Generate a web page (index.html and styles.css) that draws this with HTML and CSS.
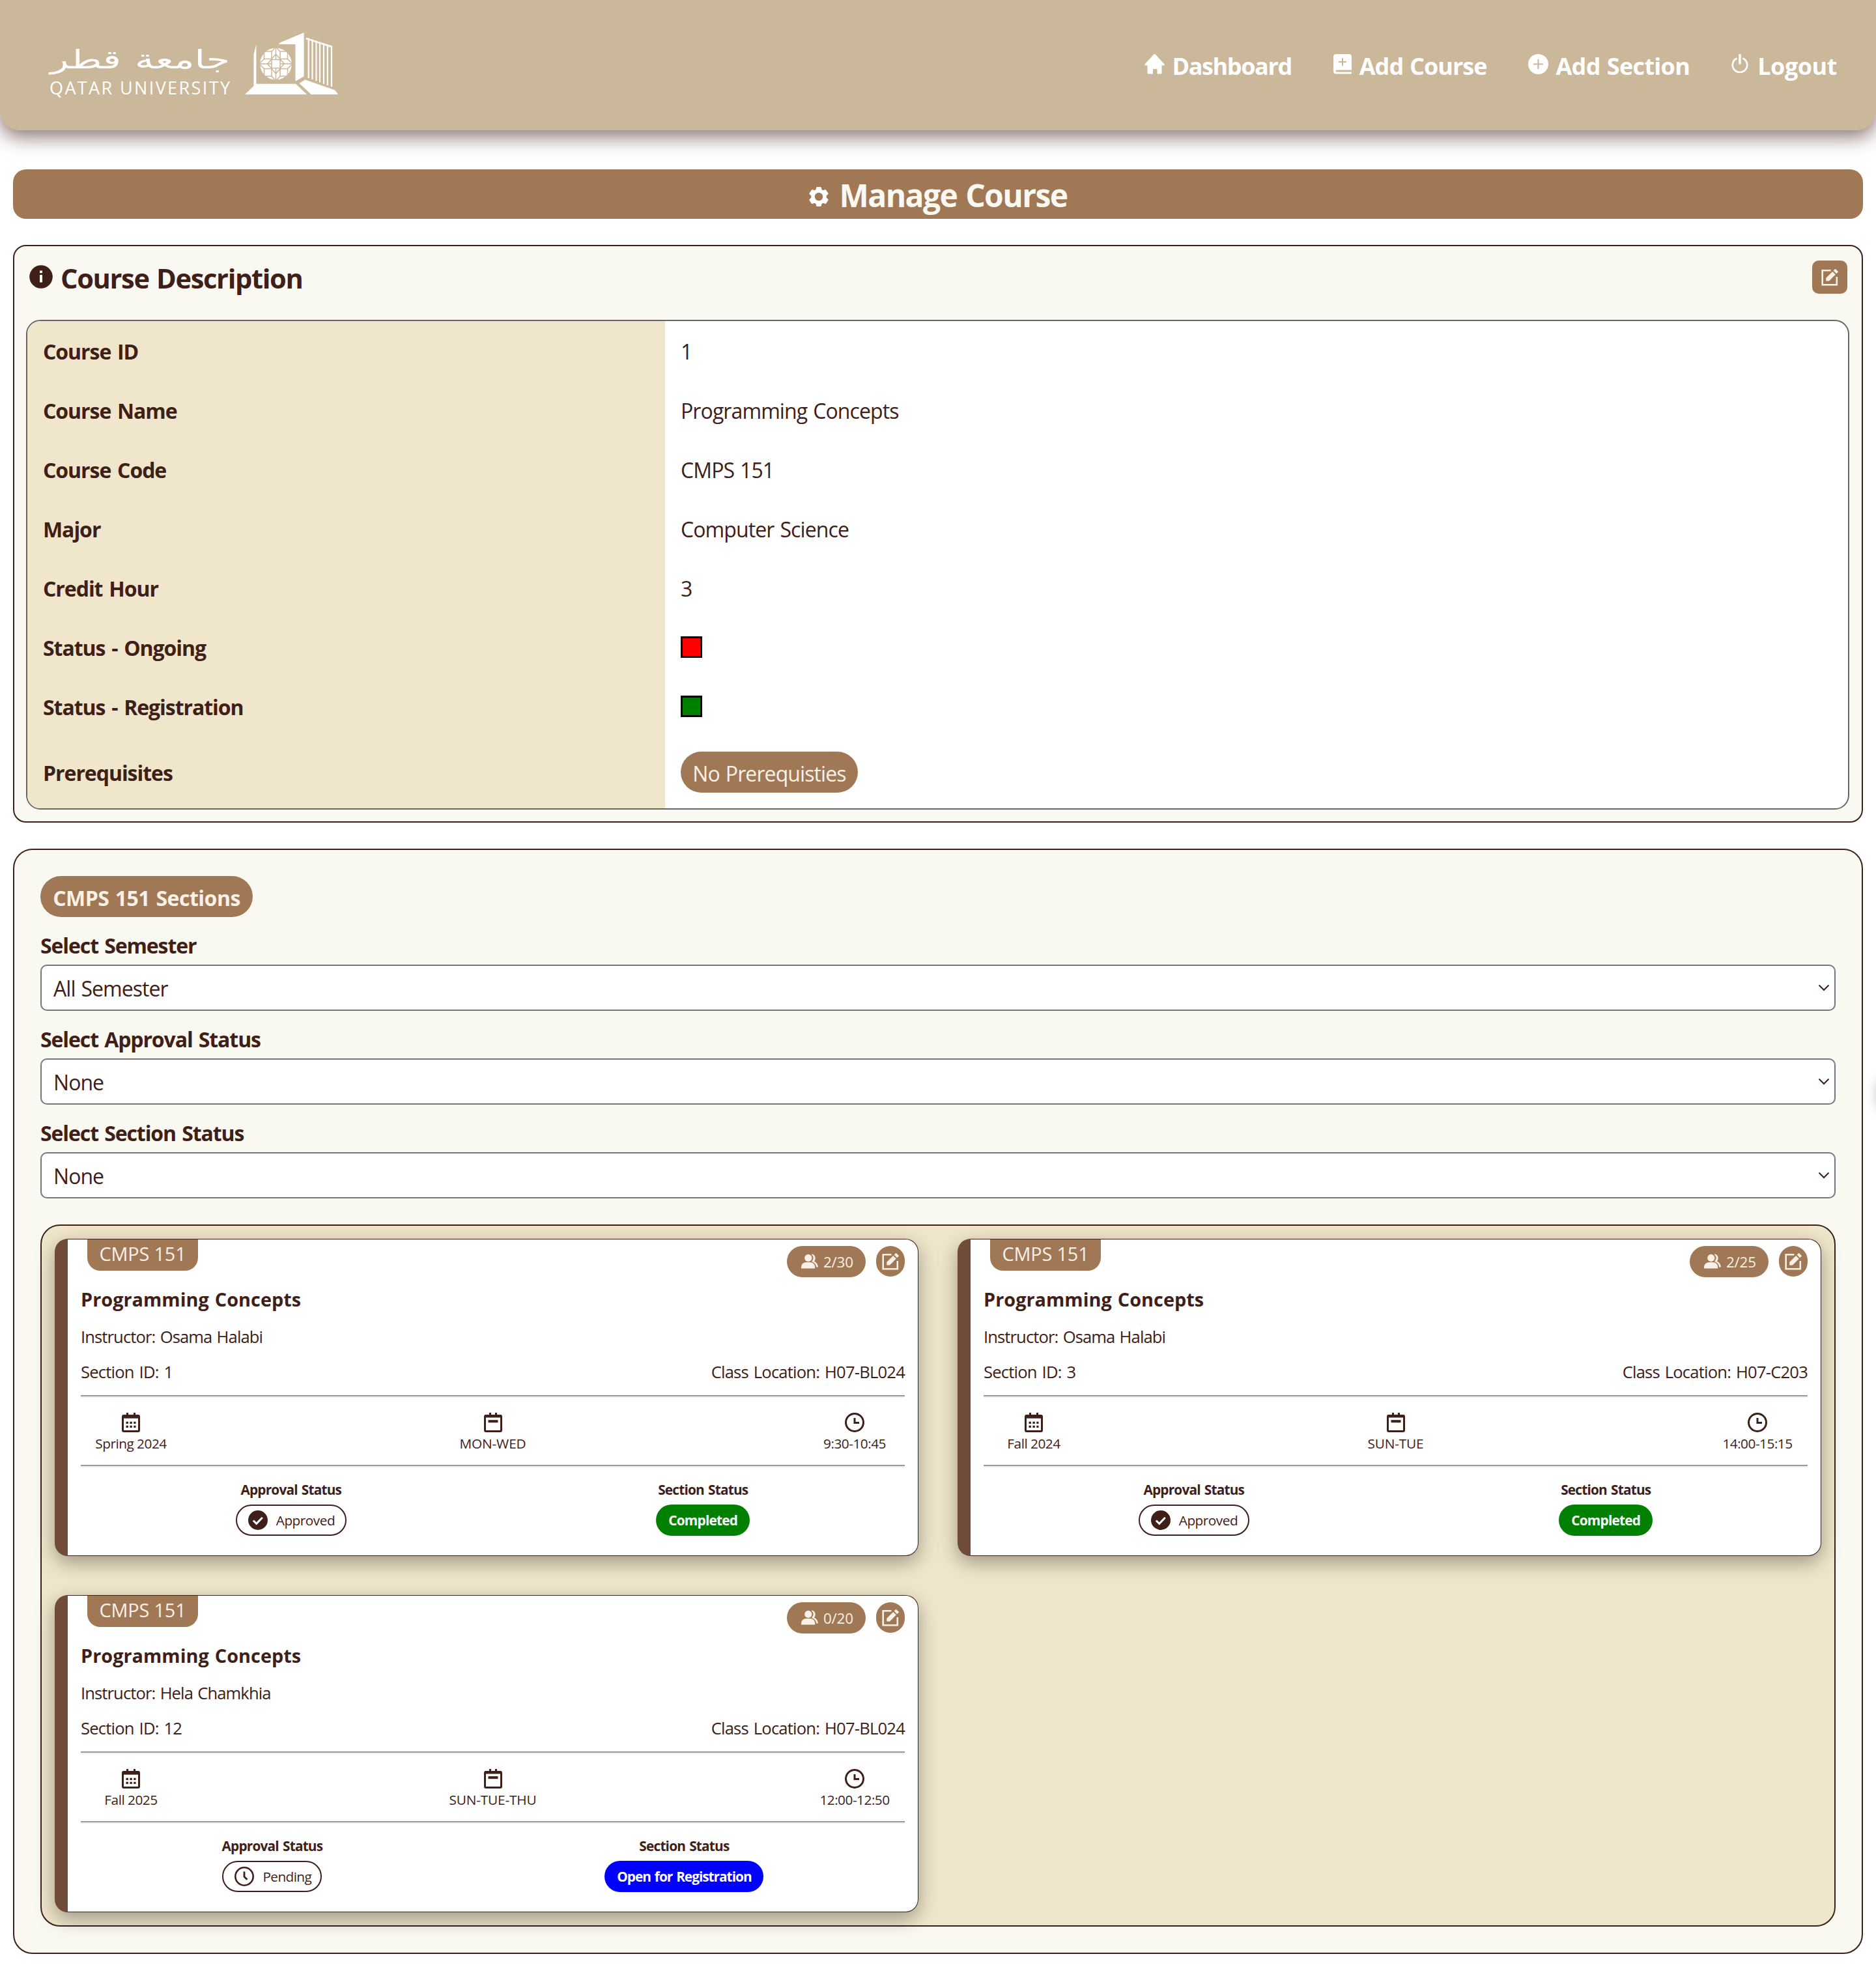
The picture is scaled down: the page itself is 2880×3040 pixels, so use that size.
FILE: index.html
```html
<!DOCTYPE html>
<html lang="en">
<head>
<meta charset="utf-8">
<title>Manage Course</title>
<link rel="stylesheet" href="styles.css">
</head>
<body>
<svg width="0" height="0" class="sprite" aria-hidden="true">
  <symbol id="edit" viewBox="0 0 28 28">
    <path d="M15.5 3.2H2.7V25.3H24.8V13" fill="none" stroke="currentColor" stroke-width="2.6"/>
    <path d="M8.3 14.8 18.2 5 22.8 9.6 12.9 19.6H8.3z" fill="currentColor"/>
    <path d="M19.6 3.6 22.6.7 27.2 5.3 24.2 8.2z" fill="currentColor"/>
  </symbol>
  <symbol id="people" viewBox="0 0 26 23">
    <circle cx="10.8" cy="6.4" r="5.6" fill="currentColor"/>
    <path d="M0 22.5V20.6C0 15.9 3.6 13 8 13H13.300C17.700 13 21.200 15.900 21.200 20.600V22.500z" fill="currentColor"/>
    <path d="M16.400.2C22 1.400 23.300 8.100 19.800 11.600 23.600 13.100 25.600 16.300 25.900 20.400H23.300C22.700 16.400 20.700 13.700 16.500 12.300V11.200C19.500 8.300 19.300 3.900 16 1.500z" fill="currentColor"/>
  </symbol>
  <symbol id="calendar" viewBox="0 0 28 30">
    <path d="M8.500 0V5M19.500 0V5" stroke="currentColor" stroke-width="3"/>
    <rect x="1.500" y="4.500" width="25" height="24" rx="1.500" fill="none" stroke="currentColor" stroke-width="3"/>
    <path d="M1 6.200H27" stroke="currentColor" stroke-width="5"/>
    <path d="M6.500 15.300H21.500M6.500 21.300H21.500" stroke="currentColor" stroke-width="3.200" stroke-dasharray="3.400 2.500"/>
  </symbol>
  <symbol id="day" viewBox="0 0 28 30">
    <path d="M9.500 0V5M18.500 0V5" stroke="currentColor" stroke-width="3"/>
    <rect x="1.500" y="4.500" width="25" height="24" rx="1.500" fill="none" stroke="currentColor" stroke-width="3"/>
    <path d="M1 5.500H27" stroke="currentColor" stroke-width="4"/>
    <path d="M6.500 13.200H21.500" stroke="currentColor" stroke-width="4"/>
  </symbol>
  <symbol id="clock" viewBox="0 0 30 30">
    <circle cx="15" cy="15" r="13.500" fill="none" stroke="currentColor" stroke-width="3"/>
    <path d="M15 8V15.500H22" fill="none" stroke="currentColor" stroke-width="3"/>
  </symbol>
  <symbol id="pending" viewBox="0 0 30 30">
    <circle cx="15" cy="15" r="13.700" fill="none" stroke="currentColor" stroke-width="2.600"/>
    <path d="M15 7.500V15.500L19.500 19.800" fill="none" stroke="currentColor" stroke-width="2.800"/>
  </symbol>
  <symbol id="check" viewBox="0 0 30 30">
    <circle cx="15" cy="15" r="15" fill="currentColor"/>
    <path d="M7.800 15.500 12.700 20.300 21.800 11" fill="none" stroke="#fff" stroke-width="3"/>
  </symbol>
</svg>

<header class="site-header">
  <svg class="logo" viewBox="70 40 460 120" role="img" aria-label="Qatar University">
    <g fill="#fff">
      <text class="logo-ar" x="77" y="105" textLength="276" lengthAdjust="spacingAndGlyphs">جامعة قطر</text>
      <text class="logo-en" x="76" y="145" textLength="277" lengthAdjust="spacing">QATAR UNIVERSITY</text>
      <path d="M393.400 68.300V128.700H454L471.300 145H376L389.500 132V83.300z"/>
      <path d="M428.600 66 466.600 50V117.300L453.500 124.700V68H428.600z"/>
      <path d="M468.200 122.300 514 138.300 519.200 145H477.700L459.500 128z"/>
    </g>
    <g fill="none" stroke="#fff" stroke-width="2.200">
      <path d="M470 59.500H473.700V120M476 61.500H479.500V122M481.800 63.500H485.500V124M487.500 65.500H491V126.500M493.300 67.500H497V129M499 69.500H502.800V131M504.500 71.500H509V133"/>
      <path d="M469.800 59 509.800 71.500"/>
    </g>
    <clipPath id="globe"><circle cx="423.500" cy="98" r="24.500"/></clipPath>
    <g clip-path="url(#globe)">
      <circle cx="423.500" cy="98" r="24.500" fill="#fff"/>
      <g fill="none" stroke="#cbb799" stroke-width="1.500">
        <rect x="417" y="91.500" width="13" height="13"/>
        <rect x="405.500" y="79" width="11.500" height="11.500"/>
        <rect x="430" y="79" width="11.500" height="11.500"/>
        <rect x="405.500" y="105.500" width="11.500" height="11.500"/>
        <rect x="430" y="105.500" width="11.500" height="11.500"/>
        <path d="M423.500 73V91M423.500 105V123M398 98H417M430 98H449M417 79 423.500 72 430 79M417 117 423.500 124 430 117M405.500 90.500 398 98 405.500 105.500M441.500 90.500 449 98 441.500 105.500M417 90.500 423.500 83M430 90.500 423.500 83M417 105.500 423.500 113 430 105.500M417 91 410.500 98 417 105M430 91 436.500 98 430 105"/>
      </g>
    </g>
  </svg>
  <nav class="nav">
    <a class="nav-link dashboard"><svg viewBox="0 0 31 31"><path d="M15.500 0q1 0 1.800.9L30.500 15.500q1 2-.8 2H26.500V29q0 1.500-1.500 1.500H19.500V23H13V30.500H6Q4.500 30.500 4.500 29V17.500H1.300Q-.5 17.500.5 15.500L13.700.9Q14.500 0 15.500 0z" fill="#fff"/></svg><span>Dashboard</span></a>
    <a class="nav-link course"><svg viewBox="0 0 29 31"><path d="M4.500 0H24Q28 0 28 4V24.500H5.500Q3.500 24.500 3.500 26T5.500 27.500H28V30.500H4.500Q0 30.500 0 26V4.500Q0 0 4.500 0z" fill="#fff"/><path d="M14 6V18M8 12H20" stroke="#cbb799" stroke-width="2"/></svg><span>Add Course</span></a>
    <a class="nav-link section"><svg viewBox="0 0 31 31"><circle cx="15.500" cy="15.500" r="15.500" fill="#fff"/><path d="M15.500 8V23M8 15.500H23" stroke="#cbb799" stroke-width="2.200"/></svg><span>Add Section</span></a>
    <a class="nav-link logout"><svg viewBox="0 0 26 31"><path d="M8.500 6.500A11.200 11.200 0 1 0 17.500 6.500" fill="none" stroke="#fff" stroke-width="2.600"/><path d="M13 0V15.500" stroke="#fff" stroke-width="3.400"/></svg><span>Logout</span></a>
  </nav>
</header>

<main class="page">
  <h1 class="page-title">
    <svg viewBox="0 0 30 30"><path d="M11 1.500Q11.200 0 12.500 0H17.500Q18.800 0 19 1.500L19.400 4 21.500 5.200 24.300 4.200Q25.500 3.800 26.200 5L29.400 9.500Q30 10.700 29 11.500L26.800 13.300V16.700L29 18.500Q30 19.300 29.400 20.500L26.500 25Q25.800 26.200 24.500 25.800L21.500 24.800 19.400 26 19 28.500Q18.800 30 17.500 30H12.500Q11.200 30 11 28.500L10.600 26 8.500 24.800 5.500 25.800Q4.200 26.200 3.500 25L.6 20.500Q0 19.300 1 18.500L3.200 16.700V13.300L1 11.500Q0 10.700.6 9.500L3.800 5Q4.500 3.800 5.700 4.200L8.500 5.200 10.600 4z" fill="#fff"/><circle cx="15" cy="15" r="6.200" fill="#a07855"/></svg>
    <span>Manage Course</span>
  </h1>

  <section class="description">
    <div class="description-head">
      <svg class="info" viewBox="0 0 36 36"><circle cx="18" cy="18" r="17.800" fill="#3e2018"/><path d="M18 8.500V12.300M18 15V26.500" stroke="#faf9f1" stroke-width="4"/></svg>
      <h2>Course Description</h2>
      <button class="edit-course" aria-label="Edit course"><svg><use href="#edit"/></svg></button>
    </div>
    <dl class="details">
      <dt>Course ID</dt><dd>1</dd>
      <dt>Course Name</dt><dd>Programming Concepts</dd>
      <dt>Course Code</dt><dd>CMPS 151</dd>
      <dt>Major</dt><dd>Computer Science</dd>
      <dt>Credit Hour</dt><dd>3</dd>
      <dt>Status - Ongoing</dt><dd class="flag"><i class="swatch red"></i></dd>
      <dt>Status - Registration</dt><dd class="flag"><i class="swatch green"></i></dd>
      <dt>Prerequisites</dt><dd class="flag"><span class="prereq">No Prerequisties</span></dd>
    </dl>
  </section>

  <section class="sections">
    <h3 class="sections-title">CMPS 151 Sections</h3>
    <div class="filter"><label>Select Semester</label>
      <div class="select"><span>All Semester</span><svg viewBox="0 0 18 12"><path d="M1.500 1.500 9 9 16.500 1.500" fill="none" stroke="#3e2018" stroke-width="2"/></svg></div></div>
    <div class="filter"><label>Select Approval Status</label>
      <div class="select"><span>None</span><svg viewBox="0 0 18 12"><path d="M1.500 1.500 9 9 16.500 1.500" fill="none" stroke="#3e2018" stroke-width="2"/></svg></div></div>
    <div class="filter"><label>Select Section Status</label>
      <div class="select"><span>None</span><svg viewBox="0 0 18 12"><path d="M1.500 1.500 9 9 16.500 1.500" fill="none" stroke="#3e2018" stroke-width="2"/></svg></div></div>

    <div class="cards">
      <article class="card">
        <div class="card-head"><span class="code">CMPS 151</span>
          <div class="tools"><span class="seats"><svg><use href="#people"/></svg>2/30</span><button class="edit" aria-label="Edit section"><svg><use href="#edit"/></svg></button></div></div>
        <h4>Programming Concepts</h4>
        <p class="instructor">Instructor: Osama Halabi</p>
        <div class="place"><span>Section ID: 1</span><span>Class Location: H07-BL024</span></div>
        <hr>
        <div class="meta">
          <div><svg class="cal"><use href="#calendar"/></svg><span>Spring 2024</span></div>
          <div><svg class="cal"><use href="#day"/></svg><span class="days">MON-WED</span></div>
          <div><svg><use href="#clock"/></svg><span>9:30-10:45</span></div>
        </div>
        <hr>
        <div class="status">
          <div><b>Approval Status</b><span class="approval"><svg><use href="#check"/></svg>Approved</span></div>
          <div><b>Section Status</b><span class="state completed">Completed</span></div>
        </div>
      </article>
      <article class="card">
        <div class="card-head"><span class="code">CMPS 151</span>
          <div class="tools"><span class="seats"><svg><use href="#people"/></svg>2/25</span><button class="edit" aria-label="Edit section"><svg><use href="#edit"/></svg></button></div></div>
        <h4>Programming Concepts</h4>
        <p class="instructor">Instructor: Osama Halabi</p>
        <div class="place"><span>Section ID: 3</span><span>Class Location: H07-C203</span></div>
        <hr>
        <div class="meta">
          <div><svg class="cal"><use href="#calendar"/></svg><span>Fall 2024</span></div>
          <div><svg class="cal"><use href="#day"/></svg><span class="days">SUN-TUE</span></div>
          <div><svg><use href="#clock"/></svg><span>14:00-15:15</span></div>
        </div>
        <hr>
        <div class="status">
          <div><b>Approval Status</b><span class="approval"><svg><use href="#check"/></svg>Approved</span></div>
          <div><b>Section Status</b><span class="state completed">Completed</span></div>
        </div>
      </article>
      <article class="card">
        <div class="card-head"><span class="code">CMPS 151</span>
          <div class="tools"><span class="seats"><svg><use href="#people"/></svg>0/20</span><button class="edit" aria-label="Edit section"><svg><use href="#edit"/></svg></button></div></div>
        <h4>Programming Concepts</h4>
        <p class="instructor">Instructor: Hela Chamkhia</p>
        <div class="place"><span>Section ID: 12</span><span>Class Location: H07-BL024</span></div>
        <hr>
        <div class="meta">
          <div><svg class="cal"><use href="#calendar"/></svg><span>Fall 2025</span></div>
          <div><svg class="cal"><use href="#day"/></svg><span class="days">SUN-TUE-THU</span></div>
          <div><svg><use href="#clock"/></svg><span>12:00-12:50</span></div>
        </div>
        <hr>
        <div class="status">
          <div><b>Approval Status</b><span class="approval wait"><svg><use href="#pending"/></svg>Pending</span></div>
          <div><b>Section Status</b><span class="state open">Open for Registration</span></div>
        </div>
      </article>
    </div>
  </section>
</main>
<aside class="side-tab"></aside>
</body>
</html>
```
FILE: styles.css
```css
* { box-sizing: border-box; margin: 0; padding: 0; }
body {
  background: #fff;
  color: #3e2018;
  font: 32px/1.4 "Open Sans", "Noto Sans", sans-serif;
  letter-spacing: -0.95px;
  word-spacing: 1.5px;
  white-space: nowrap;
  overflow: hidden;
}
svg { display: block; flex: none; }
.sprite { position: absolute; }
button { border: 0; background: #a07855; color: #faf0e6; }

.site-header {
  height: 200px;
  padding: 0 60px 0 70px;
  display: flex;
  justify-content: space-between;
  align-items: center;
  background: #cbb799;
  border-radius: 0 0 30px 30px;
  box-shadow: 0 10px 30px rgba(62, 20, 20, .6);
}
.logo { width: 460px; height: 120px; }
.logo-ar { font: 40px "DejaVu Sans", sans-serif; letter-spacing: 0; }
.logo-en { font: 27px "Open Sans", sans-serif; letter-spacing: 0; word-spacing: 0; }
.nav { display: flex; gap: 64px; color: #fff; font-weight: 700; font-size: 36px; }
.nav-link { display: flex; align-items: center; gap: 11px; height: 60px; line-height: 60px; letter-spacing: -1px; }
.nav-link svg { width: 31px; height: 31px; margin-bottom: 3px; }
.nav-link span { margin-top: 3px; }
.dashboard { letter-spacing: -1.4px; }
.course svg { width: 29px; }
.section { letter-spacing: -.7px; }
.logout { gap: 14px; letter-spacing: -.45px; }
.logout svg { width: 26px; }

.page { padding: 60px 20px 0; }
.page-title {
  height: 76px;
  display: flex;
  align-items: center;
  justify-content: center;
  gap: 17px;
  background: #a07855;
  border-radius: 20px;
  color: #faf9f1;
  font-size: 48px;
  line-height: 80px;
  letter-spacing: -1.6px;
  word-spacing: 2px;
}
.page-title svg { width: 30px; height: 30px; margin-top: 8px; }
.page-title span { margin-top: 4px; }

.description {
  height: 887px;
  margin-top: 40px;
  padding: 19px 19px 18px 18px;
  border: 2px solid #3e2018;
  border-radius: 20px;
  background: #faf9f1;
}
.description-head { height: 94px; display: flex; align-items: flex-start; padding: 3px 3px 0 5px; }
.description-head h2 { flex: 1; margin: 0 0 0 12px; font-size: 41.6px; line-height: 55px; letter-spacing: -1.35px; word-spacing: 2px; }
.info { width: 36px; height: 36px; margin-top: 7px; }
.edit-course { width: 54px; height: 51px; border-radius: 10px; display: grid; place-items: center; }
.edit-course svg, .edit svg { width: 28px; height: 28px; }
.details {
  height: 752px;
  display: grid;
  grid-template-columns: 979px 1fr;
  grid-template-rows: repeat(7, 91px) 1fr;
  border: 2px solid #666;
  border-radius: 22px;
  overflow: hidden;
  background: #fff;
}
.details dt, .details dd { display: flex; align-items: center; padding: 4px 0 0 24px; }
.details dt { background: #f0e6cb; font-weight: 700; letter-spacing: -1.05px; word-spacing: 2.5px; }
.details dd { letter-spacing: -.9px; }
.details .flag { padding-top: 0; }
.swatch { width: 33px; height: 33px; border: 3px solid #000; }
.red { background: red; }
.green { background: green; }
.prereq { width: 272px; height: 63px; border-radius: 32px; background: #a07855; color: #faf0e6; text-align: center; line-height: 67px; }

.sections {
  height: 1697px;
  margin-top: 40px;
  padding: 40px 40px;
  border: 2px solid #3e2018;
  border-radius: 30px;
  background: #faf9f1;
}
.sections-title { width: 326px; height: 63px; border-radius: 32px; background: #a07855; color: #faf0e6; font-size: 32px; line-height: 67px; text-align: center; letter-spacing: -.5px; }
.filter { height: 144px; }
.filter label { display: block; height: 73px; line-height: 87px; font-weight: 700; letter-spacing: -1.1px; word-spacing: 2px; }
.select { height: 71px; display: flex; align-items: center; justify-content: space-between; padding: 1px 7px 0 18px; border: 2px solid #767676; border-radius: 10px; background: #fff; }
.select span { margin-top: 3px; }
.select svg { width: 18px; height: 12px; }

.cards {
  height: 1078px;
  margin-top: 40px;
  padding: 20px;
  display: grid;
  grid-template-columns: 1fr 1fr;
  grid-auto-rows: 487px;
  gap: 60px;
  border: 2px solid #3e2018;
  border-radius: 30px;
  background: #f0e6cb;
}
.card {
  padding: 0 20px;
  border: 1px solid #3e2018;
  border-left: 20px solid #704c38;
  border-radius: 20px;
  background: #fff;
  box-shadow: 0 10px 30px rgba(0, 0, 0, .35);
}
.card-head { height: 72px; display: flex; justify-content: space-between; align-items: flex-start; padding-left: 10px; }
.code { width: 170px; height: 48px; line-height: 44px; border-radius: 0 0 20px 20px; background: #a07855; color: #faf0e6; font-size: 28.8px; text-align: center; letter-spacing: -.1px; word-spacing: 0; }
.tools { display: flex; gap: 16px; padding-top: 10px; }
.seats { width: 121px; height: 48px; display: flex; align-items: center; gap: 8px; padding: 1px 0 0 22px; border-radius: 24px; background: #a07855; color: #faf0e6; font-size: 22.4px; letter-spacing: -.2px; }
.seats svg { width: 26px; height: 23px; margin-bottom: 2px; }
.edit { width: 44px; height: 47px; border-radius: 22px; display: grid; place-items: center; }
.card h4 { height: 40px; line-height: 40px; font-size: 28.8px; letter-spacing: .05px; }
.instructor { margin-top: 20px; height: 36px; line-height: 36px; font-size: 25.6px; letter-spacing: -.9px; word-spacing: 1.5px; }
.place { margin-top: 17px; height: 36px; line-height: 38px; display: flex; justify-content: space-between; font-size: 25.6px; letter-spacing: -.8px; word-spacing: 2px; }
.card hr { height: 4px; border: 0; border-top: 2px solid #999; background: #eee; }
.place + hr { margin-top: 18px; }
.meta { margin-top: 23px; height: 80px; display: flex; justify-content: space-between; font-size: 20.8px; letter-spacing: -.5px; word-spacing: 0; }
.meta div { width: 154px; display: flex; flex-direction: column; align-items: center; gap: 3px; line-height: 28px; }
.meta svg { width: 30px; height: 30px; }
.meta .cal { width: 28px; }
.meta .days { letter-spacing: -.16px; }
.status { margin-top: 20px; display: flex; justify-content: space-around; font-size: 20.8px; line-height: 28px; }
.status div { display: flex; flex-direction: column; align-items: center; gap: 9px; }
.status b { letter-spacing: -.8px; }
.approval { width: 170px; height: 48px; display: flex; align-items: center; gap: 13px; padding: 0 0 0 17px; border: 2px solid #3e2018; border-radius: 24px; letter-spacing: -.5px; }
.approval svg { width: 30px; height: 30px; }
.wait { width: 153px; letter-spacing: -.6px; }
.state { height: 48px; border-radius: 24px; color: #fff; font-weight: 700; line-height: 49px; text-align: center; letter-spacing: -.75px; }
.completed { width: 144px; background: green; }
.open { width: 244px; background: blue; letter-spacing: -1px; }

/* drawer handle parked just outside the right edge */
.side-tab { position: fixed; right: -43px; top: 1655px; width: 40px; height: 50px; border-radius: 25px; box-shadow: 0 0 20px rgba(0, 0, 0, .3); }
```
